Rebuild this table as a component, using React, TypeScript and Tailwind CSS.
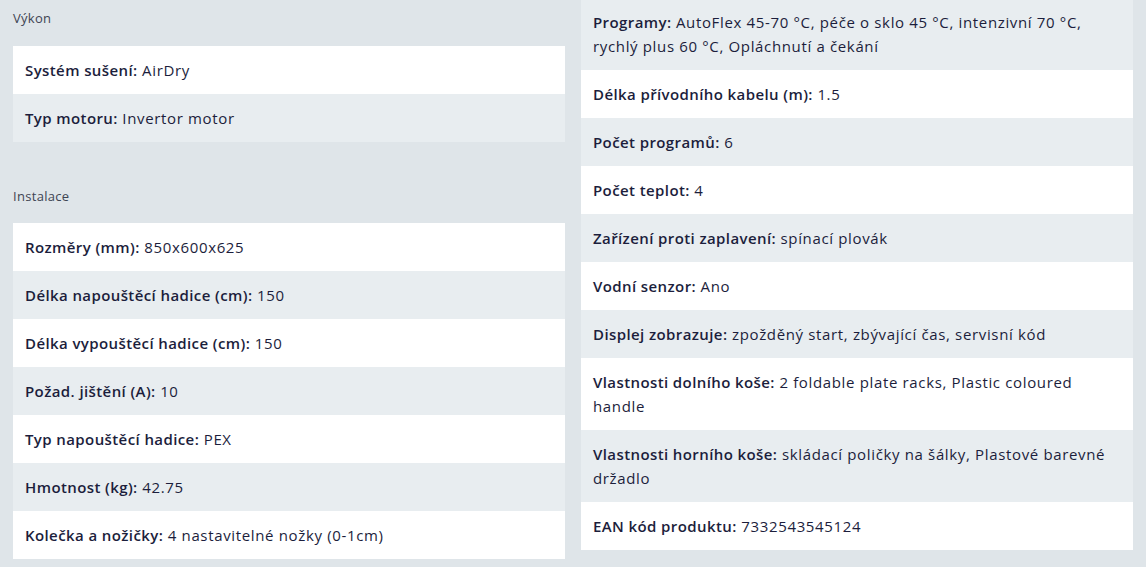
import React from "react";

type Row = { k: string; v: string; bg: "w" | "g" };

const Rowc = ({ r }: { r: Row }) => (
  <div
    className={`pl-3 pr-5 py-3 leading-6 text-[15px] text-[#1c1e3c] tracking-[0.65px] ${
      r.bg === "w" ? "bg-white" : "bg-[#e8edf0]"
    }`}
  >
    <span className="font-semibold tracking-[0.4px]">{r.k}:</span> {r.v}
  </div>
);

const vykon: Row[] = [
  { k: "Systém sušení", v: "AirDry", bg: "w" },
  { k: "Typ motoru", v: "Invertor motor", bg: "g" },
];

const instalace: Row[] = [
  { k: "Rozměry (mm)", v: "850x600x625", bg: "w" },
  { k: "Délka napouštěcí hadice (cm)", v: "150", bg: "g" },
  { k: "Délka vypouštěcí hadice (cm)", v: "150", bg: "w" },
  { k: "Požad. jištění (A)", v: "10", bg: "g" },
  { k: "Typ napouštěcí hadice", v: "PEX", bg: "w" },
  { k: "Hmotnost (kg)", v: "42.75", bg: "g" },
  { k: "Kolečka a nožičky", v: "4 nastavitelné nožky (0-1cm)", bg: "w" },
];

const right: Row[] = [
  {
    k: "Programy",
    v: "AutoFlex 45-70 °C, péče o sklo 45 °C, intenzivní 70 °C, rychlý plus 60 °C, Opláchnutí a čekání",
    bg: "g",
  },
  { k: "Délka přívodního kabelu (m)", v: "1.5", bg: "w" },
  { k: "Počet programů", v: "6", bg: "g" },
  { k: "Počet teplot", v: "4", bg: "w" },
  { k: "Zařízení proti zaplavení", v: "spínací plovák", bg: "g" },
  { k: "Vodní senzor", v: "Ano", bg: "w" },
  { k: "Displej zobrazuje", v: "zpožděný start, zbývající čas, servisní kód", bg: "g" },
  { k: "Vlastnosti dolního koše", v: "2 foldable plate racks, Plastic coloured handle", bg: "w" },
  { k: "Vlastnosti horního koše", v: "skládací poličky na šálky, Plastové barevné držadlo", bg: "g" },
  { k: "EAN kód produktu", v: "7332543545124", bg: "w" },
];

export default function App() {
  return (
    <div
      className="w-[1146px] h-[567px] overflow-hidden bg-[#dfe5e9] flex gap-4 px-[13px]"
      style={{ fontFamily: "'Open Sans', 'Noto Sans', sans-serif" }}
    >
      <div className="w-[552px] flex flex-col">
        <div className="mb-[36px]">
          <div className="pt-2 pb-[18px] leading-5 text-[13px] text-[#3e4453] tracking-[0.3px]">
            Výkon
          </div>
          {vykon.map((r) => (
            <Rowc key={r.k} r={r} />
          ))}
        </div>
        <div>
          <div className="pt-2 pb-[17px] leading-5 text-[13px] text-[#3e4453] tracking-[0.3px]">
            Instalace
          </div>
          {instalace.map((r) => (
            <Rowc key={r.k} r={r} />
          ))}
        </div>
      </div>
      <div className="w-[552px] flex flex-col -mt-[2px]">
        {right.map((r) => (
          <Rowc key={r.k} r={r} />
        ))}
      </div>
    </div>
  );
}
